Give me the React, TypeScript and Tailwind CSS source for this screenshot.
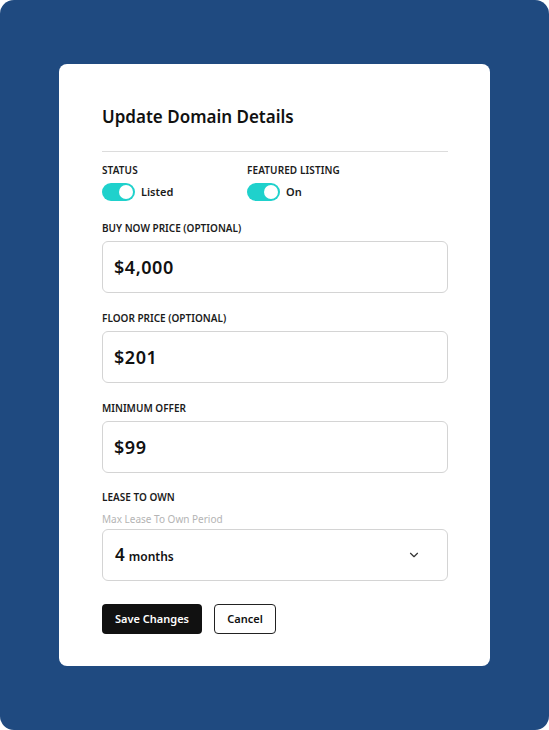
import * as React from 'react';
import { ChevronDown } from 'lucide-react';

type ToggleProps = {
  label: string;
  text: string;
  className?: string;
};

function Toggle({ label, text, className }: ToggleProps) {
  return (
    <div className={`flex flex-col gap-[6px] ${className ?? ''}`}>
      <span className="text-[10px] font-semibold uppercase leading-[14px] tracking-[0.01em] text-[#1b1b1b]">
        {label}
      </span>
      <div className="flex items-center gap-[6px]">
        <div className="flex h-[18px] w-[33px] items-center justify-end rounded-full bg-[#1fd1cc] px-[2px]">
          <div className="h-[14px] w-[14px] rounded-full bg-white" />
        </div>
        <span className="text-[11px] font-semibold leading-[14px] text-[#1b1b1b]">{text}</span>
      </div>
    </div>
  );
}

function PriceField({ label, value }: { label: string; value: string }) {
  return (
    <div className="flex flex-col gap-[6px]">
      <span className="text-[10px] font-semibold uppercase leading-[14px] text-[#1b1b1b]">
        {label}
      </span>
      <div className="flex h-[52px] items-center rounded-[6px] border border-[#d4d4d4] px-[11px]">
        <span className="text-[18px] font-semibold tracking-[0.03em] text-[#111]">{value}</span>
      </div>
    </div>
  );
}

export default function App() {
  return (
    <div
      className="h-[730px] w-[549px] bg-white"
      style={{ fontFamily: '"Noto Sans", "Liberation Sans", sans-serif' }}
    >
      <div className="flex h-full w-full items-start justify-center rounded-[14px] bg-[#1f4a80] pt-[64px]">
        <div className="flex h-[602px] w-[431px] flex-col rounded-[8px] bg-white pl-[43px] pr-[42px] pt-[41px]">
          <h1 className="text-[17px] font-semibold leading-[24px] text-[#111]">Update Domain Details</h1>
          <div className="mt-[22px] border-t border-[#dcdcdc]" />

          <div className="mt-[11px] flex">
            <Toggle className="w-[145px]" label="Status" text="Listed" />
            <Toggle label="Featured Listing" text="On" />
          </div>

          <div className="mt-[20px] flex flex-col gap-[18px]">
            <PriceField label="Buy Now Price (Optional)" value="$4,000" />
            <PriceField label="Floor Price (Optional)" value="$201" />
            <PriceField label="Minimum Offer" value="$99" />
          </div>

          <div className="mt-[17px] flex flex-col">
            <span className="text-[10px] font-semibold uppercase leading-[14px] text-[#1b1b1b]">
              Lease To Own
            </span>
            <span className="mt-[8px] text-[10px] leading-[14px] text-[#b4b4b4]">Max Lease To Own Period</span>
            <div className="mt-[3px] flex h-[52px] items-center justify-between rounded-[6px] border border-[#d4d4d4] pl-[12px] pr-[26px]">
              <span className="flex items-baseline gap-[4px] text-[#111]">
                <span className="text-[17px] font-semibold">4</span>
                <span className="text-[12px] font-semibold">months</span>
              </span>
              <ChevronDown className="h-[14px] w-[14px] text-[#333]" strokeWidth={2} />
            </div>
          </div>

          <div className="mt-[23px] flex gap-[12px]">
            <button
              className="h-[30px] w-[100px] rounded-[4px] bg-[#111] text-[11px] font-semibold text-white"
              type="button"
            >
              Save Changes
            </button>
            <button
              className="h-[30px] w-[62px] rounded-[4px] border-[1.5px] border-[#222] bg-white text-[11px] font-semibold text-[#111]"
              type="button"
            >
              Cancel
            </button>
          </div>
        </div>
      </div>
    </div>
  );
}
